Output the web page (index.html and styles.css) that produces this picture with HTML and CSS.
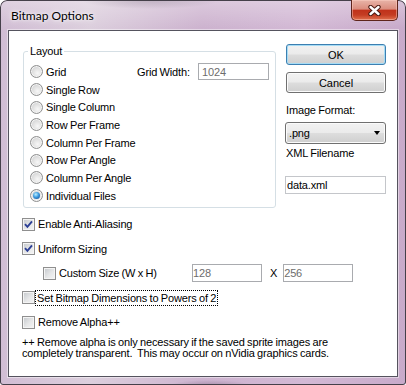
FILE: index.html
```html
<!DOCTYPE html>
<html>
<head>
<link rel="stylesheet" href="styles.css">
</head>
<body>

<div class="window">
  <div class="titlebar">
    <span class="title">Bitmap Options</span>
    <div class="close">
      <svg width="13" height="11" viewBox="0 0 13 11">
        <path d="M2.5 2 L10.5 9 M10.5 2 L2.5 9" stroke="#4a1a12" stroke-width="4.4" stroke-linecap="round"/>
        <path d="M2.5 2 L10.5 9 M10.5 2 L2.5 9" stroke="#fff" stroke-width="2.4" stroke-linecap="round"/>
      </svg>
    </div>
  </div>

  <div class="client">
    <div class="top">
      <fieldset class="group">
        <legend>Layout</legend>
        <div class="group-body">
          <div class="radios">
            <div class="radio-row"><span class="radio"></span>Grid</div>
            <div class="radio-row"><span class="radio"></span>Single Row</div>
            <div class="radio-row"><span class="radio"></span>Single Column</div>
            <div class="radio-row"><span class="radio"></span>Row Per Frame</div>
            <div class="radio-row"><span class="radio"></span>Column Per Frame</div>
            <div class="radio-row"><span class="radio"></span>Row Per Angle</div>
            <div class="radio-row"><span class="radio"></span>Column Per Angle</div>
            <div class="radio-row"><span class="radio checked"></span>Individual Files</div>
          </div>
          <div class="grid-width">
            <span>Grid Width:</span>
            <input class="field off width-field" value="1024">
          </div>
        </div>
      </fieldset>

      <div class="side">
        <button class="btn default">OK</button>
        <button class="btn cancel">Cancel</button>
        <div class="side-label format-label">Image Format:</div>
        <div class="combo"><span>.png</span><span class="arrow"></span></div>
        <div class="side-label xml-label">XML Filename</div>
        <input class="field xml-field" value="data.xml">
      </div>
    </div>

    <div class="options">
      <div class="check-row">
        <span class="check"><svg width="11" height="11" viewBox="0 0 11 11"><path d="M2 5.2 L4.4 7.8 L9 2.4" fill="none" stroke="#2c3f95" stroke-width="1.9"/></svg></span>
        Enable Anti-Aliasing
      </div>
      <div class="check-row">
        <span class="check"><svg width="11" height="11" viewBox="0 0 11 11"><path d="M2 5.2 L4.4 7.8 L9 2.4" fill="none" stroke="#2c3f95" stroke-width="1.9"/></svg></span>
        Uniform Sizing
      </div>
      <div class="check-row custom-row">
        <span class="check"></span>
        <span class="custom-label">Custom Size (W x H)</span>
        <input class="field off size-field" value="128">
        <span class="times">X</span>
        <input class="field off size-field" value="256">
      </div>
      <div class="check-row focus-row">
        <span class="check"></span>
        <span class="focused">Set Bitmap Dimensions to Powers of 2</span>
      </div>
      <div class="check-row">
        <span class="check"></span>
        Remove Alpha++
      </div>
    </div>

    <p class="note">++ Remove alpha is only necessary if the saved sprite images are<br>completely transparent.&nbsp; This may occur on nVidia graphics cards.</p>
  </div>
</div>

</body>
</html>
```

FILE: styles.css
```css
body {
  margin: 0;
  font-family: "Liberation Sans", Arial, sans-serif;
  font-size: 11px;
  letter-spacing: -0.15px;
  word-spacing: -0.5px;
  color: #000;
}

.window {
  width: 406px;
  height: 385px;
  box-sizing: border-box;
  padding: 0 8px 8px;
  display: flex;
  flex-direction: column;
  border-radius: 7px 7px 3px 3px;
  background:
    linear-gradient(180deg, rgba(255, 255, 255, 0.3), rgba(255, 255, 255, 0) 28px),
    radial-gradient(ellipse 70px 9px at 150px 0, rgba(110, 90, 115, 0.45), rgba(110, 90, 115, 0)),
    radial-gradient(ellipse 40px 5px at 210px 385px, rgba(110, 90, 115, 0.35), rgba(110, 90, 115, 0)),
    linear-gradient(90deg, #d1bdd4 0%, #dccfdd 22%, #cdb3cf 50%, #d3b9d5 75%, #c8aaca 100%);
  box-shadow: inset 0 0 0 1px #45404a;
}

/* title bar */
.titlebar {
  height: 30px;
  display: flex;
  justify-content: space-between;
  align-items: flex-start;
}

.title {
  padding: 8px 0 0 3px;
  font-family: Lato, "Noto Sans", sans-serif;
  font-size: 12px;
  letter-spacing: 0;
  word-spacing: 0;
  text-shadow: 0 0 6px rgba(255, 255, 255, 0.9), 0 0 3px rgba(255, 255, 255, 0.9);
}

.close {
  width: 47px;
  height: 21px;
  box-sizing: border-box;
  border: 1px solid #5e241b;
  border-top: none;
  border-radius: 0 0 5px 5px;
  display: flex;
  justify-content: center;
  align-items: center;
  background: linear-gradient(180deg, #e8b4a8 0%, #db8d7e 45%, #c0321b 52%, #c43d23 75%, #e0704e 100%);
  box-shadow: inset 0 0 0 1px rgba(255, 210, 200, 0.45);
}

/* client area */
.client {
  flex: 1;
  background: #fff;
  border: 1px solid #55535e;
  padding: 14px 11px 0 13px;
  box-shadow: 0 0 0 1px rgba(255, 255, 255, 0.45);
}

.top {
  display: flex;
  align-items: flex-start;
  gap: 9px;
}

.group {
  margin: 0 0 0 1px;
  width: 253px;
  min-width: 0;
  box-sizing: border-box;
  border: 1px solid #d5dfe5;
  border-radius: 3px;
  padding: 5px 6px 2px 6px;
}

.group legend {
  padding: 0 2px;
  margin-left: -2px;
  line-height: 13px;
}

.group-body {
  display: flex;
  align-items: flex-start;
}

.radios {
  width: 107px;
}

.radio-row {
  display: flex;
  align-items: center;
  gap: 3px;
  height: 17.7px;
  white-space: nowrap;
}

.radio {
  width: 13px;
  height: 13px;
  flex: none;
  box-sizing: border-box;
  border-radius: 50%;
  border: 1px solid #8f9090;
  background: radial-gradient(circle at 60% 65%, #f7f7f7 0%, #e2e2e2 45%, #c3c5c7 100%);
  box-shadow: inset 0 0 0 1px #f4f4f4;
  display: flex;
  justify-content: center;
  align-items: center;
}

.radio.checked::after {
  content: "";
  width: 7px;
  height: 7px;
  border-radius: 50%;
  background: radial-gradient(circle at 40% 35%, #bdf0ff 0%, #3d9be0 45%, #0b3f88 100%);
}

.grid-width {
  flex: 1;
  display: flex;
  align-items: center;
  height: 17.7px;
}

/* inputs */
.field {
  box-sizing: border-box;
  height: 18px;
  margin: 0;
  border: 1px solid #c4c6ca;
  background: #fff;
  font-family: "Liberation Sans", Arial, sans-serif;
  font-size: 11px;
  letter-spacing: -0.15px;
  color: #000;
  outline: none;
}

.field.off {
  border-color: #a9abaf;
  color: #6d6d6d;
}

.width-field {
  width: 71px;
  height: 17px;
  margin-left: auto;
  padding: 0 3px;
}

.xml-field {
  width: 101px;
  margin-top: 16px;
  padding: 0 1px;
}

.size-field {
  width: 70px;
  padding: 0 1px 0 0;
}

/* right column */
.side {
  width: 101px;
  display: flex;
  flex-direction: column;
  margin-top: -1px;
}

.btn {
  margin: 0 0 0 1px;
  width: 100px;
  height: 21px;
  padding: 0;
  border: 1px solid #707070;
  border-radius: 3px;
  font-family: "Liberation Sans", Arial, sans-serif;
  font-size: 11px;
  color: #000;
  background: linear-gradient(180deg, #f2f2f2 0%, #ebebeb 48%, #dddddd 52%, #cfcfcf 100%);
  box-shadow: inset 0 0 0 1px #fbfbfb;
}

.btn.default {
  border-color: #3c7fb1;
  box-shadow: inset 0 0 0 1px #a6dcf5;
}

.btn.cancel {
  margin-top: 7px;
}

.side-label {
  padding-left: 1px;
  line-height: 13px;
}

.format-label {
  margin-top: 11px;
}

.xml-label {
  margin-top: 3px;
}

.combo {
  margin-top: 5px;
  height: 22px;
  box-sizing: border-box;
  border: 1px solid #707070;
  border-radius: 3px;
  padding: 0 5px 0 3px;
  display: flex;
  justify-content: space-between;
  align-items: center;
  background: linear-gradient(180deg, #f2f2f2 0%, #ebebeb 48%, #dddddd 52%, #cfcfcf 100%);
  box-shadow: inset 0 0 0 1px #fbfbfb;
}

.arrow {
  width: 0;
  height: 0;
  border-left: 3.5px solid transparent;
  border-right: 3.5px solid transparent;
  border-top: 4px solid #000;
}

/* check boxes */
.options {
  margin-top: 8px;
  display: flex;
  flex-direction: column;
  gap: 7.5px;
}

.check-row {
  display: flex;
  align-items: center;
  gap: 3px;
  height: 17px;
  white-space: nowrap;
}

.check {
  width: 13px;
  height: 13px;
  flex: none;
  box-sizing: border-box;
  border: 1px solid #8f8f8f;
  background: linear-gradient(135deg, #c3c7cb 0%, #e6e7e8 55%, #f5f5f5 100%);
  box-shadow: inset 0 0 0 1px #f4f4f4;
  display: flex;
  justify-content: center;
  align-items: center;
}

.custom-row {
  padding-left: 21px;
}

.custom-label {
  width: 130px;
}

.times {
  margin: 0 3px 0 5px;
}

.focus-row {
  gap: 1px;
}

.focused {
  padding: 0 1px;
  line-height: 14px;
  outline: 1px dotted #000;
}

.note {
  margin: 6px 0 0;
  line-height: 11px;
}
```
